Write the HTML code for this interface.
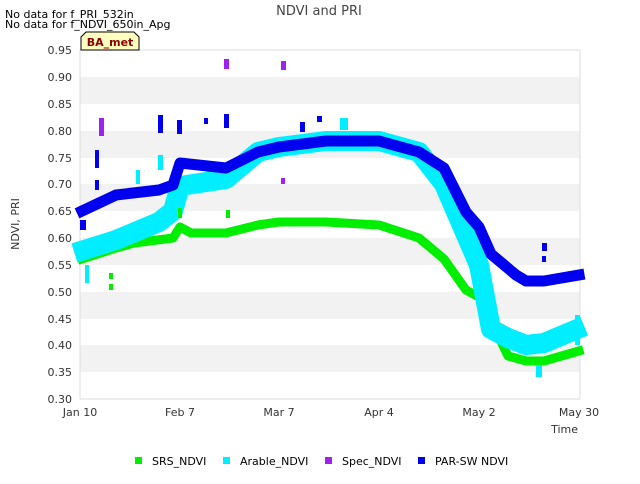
<!DOCTYPE html>
<html><head><style>
body{margin:0;width:640px;height:480px;background:#fff;font-family:"DejaVu Sans","Liberation Sans",sans-serif;overflow:hidden}
</style></head><body>
<svg width="640" height="480" xmlns="http://www.w3.org/2000/svg" font-family="DejaVu Sans, Liberation Sans, sans-serif">
<rect x="80" y="77" width="500" height="27" fill="#f2f2f2"/>
<rect x="80" y="131" width="500" height="27" fill="#f2f2f2"/>
<rect x="80" y="184" width="500" height="27" fill="#f2f2f2"/>
<rect x="80" y="238" width="500" height="27" fill="#f2f2f2"/>
<rect x="80" y="292" width="500" height="27" fill="#f2f2f2"/>
<rect x="80" y="345" width="500" height="27" fill="#f2f2f2"/>
<g stroke="#ddd" stroke-width="1">
<line x1="80" y1="50" x2="580" y2="50"/><line x1="80" y1="399" x2="580" y2="399"/>
<line x1="80" y1="50" x2="80" y2="399"/><line x1="580" y1="50" x2="580" y2="399"/>
</g>
<g stroke-linejoin="round" stroke-linecap="square" fill="none">
<polyline stroke="#00ee00" stroke-width="9" points="82,259 116,248 134,243 173,238 180,227 191,233 226,233 258,225 279,222 326,222 379,225 419,238 444,259 466,290 479,297 491,318 498,335 508,356 526,361 544,361 579,351"/>
<polyline stroke="#00eeff" stroke-width="20" points="84,250 116,240 159,222 173,211 180,186 226,179 258,152 279,147 326,141 379,141 419,152 444,184 466,235 479,265 491,329 508,338 526,345 544,343 575,330"/>
<polyline stroke="#0000ee" stroke-width="11" points="82,211 116,195 159,190 173,185 180,163 226,168 258,152 279,147 326,141 379,141 419,152 444,168 466,212 479,227 491,254 516,275 526,281 544,281 579,275"/>
</g>
<g fill="#00ee00">
<rect x="109" y="273" width="4" height="6"/><rect x="109" y="284" width="4" height="6"/><rect x="178" y="208" width="4" height="10"/><rect x="226" y="210" width="4" height="8"/>
</g>
<g fill="#00eeff">
<rect x="136" y="170" width="4" height="14"/><rect x="158" y="155" width="5" height="15"/><rect x="85" y="265" width="4" height="18"/><rect x="340" y="118" width="8" height="12"/><rect x="536" y="365" width="6" height="12"/><rect x="575" y="315" width="5" height="30"/>
</g>
<g fill="#a020f0">
<rect x="99" y="118" width="5" height="18"/><rect x="224" y="59" width="5" height="10"/><rect x="281" y="61" width="5" height="9"/><rect x="281" y="178" width="4" height="6"/>
</g>
<g fill="#0000ee">
<rect x="95" y="150" width="4" height="18"/><rect x="95" y="180" width="4" height="10"/><rect x="158" y="115" width="5" height="18"/><rect x="177" y="120" width="5" height="14"/><rect x="204" y="118" width="4" height="6"/><rect x="224" y="114" width="5" height="14"/><rect x="300" y="122" width="5" height="10"/><rect x="317" y="116" width="5" height="6"/><rect x="459" y="204" width="5" height="6"/><rect x="542" y="243" width="5" height="8"/><rect x="542" y="256" width="4" height="6"/><rect x="80" y="220" width="6" height="10"/>
</g>
<g font-size="11" fill="#333" text-anchor="end">
<text x="72" y="54">0.95</text><text x="72" y="81">0.90</text><text x="72" y="108">0.85</text><text x="72" y="135">0.80</text><text x="72" y="162">0.75</text><text x="72" y="188">0.70</text><text x="72" y="215">0.65</text><text x="72" y="242">0.60</text><text x="72" y="269">0.55</text><text x="72" y="296">0.50</text><text x="72" y="323">0.45</text><text x="72" y="349">0.40</text><text x="72" y="376">0.35</text><text x="72" y="403">0.30</text>
</g>
<g font-size="11" fill="#333" text-anchor="middle">
<text x="80" y="416">Jan 10</text><text x="180" y="416">Feb 7</text><text x="279" y="416">Mar 7</text><text x="379" y="416">Apr 4</text><text x="479" y="416">May 2</text><text x="579" y="416">May 30</text>
</g>
<text x="578" y="433" font-size="11" fill="#333" text-anchor="end">Time</text>
<text x="19" y="224" font-size="11" fill="#333" text-anchor="middle" transform="rotate(-90 19 224)">NDVI, PRI</text>
<text x="319" y="15" font-size="13" fill="#444" text-anchor="middle">NDVI and PRI</text>
<text x="5" y="18" font-size="11" fill="#000">No data for f_PRI_532in</text>
<text x="5" y="28" font-size="11" fill="#000">No data for f_NDVI_650in_Apg</text>
<path d="M81,50 L81,37 L86,32 L134,32 L139,37 L139,50 Z" fill="#ffffc0" stroke="#000" stroke-width="1"/>
<text x="110" y="46" font-size="11" font-weight="bold" fill="#8b0000" text-anchor="middle">BA_met</text>
<g font-size="11" fill="#000">
<rect x="135" y="457" width="7" height="7" fill="#00ee00"/><text x="152" y="465">SRS_NDVI</text>
<rect x="223" y="457" width="7" height="7" fill="#00eeff"/><text x="240" y="465">Arable_NDVI</text>
<rect x="325" y="457" width="7" height="7" fill="#a020f0"/><text x="342" y="465">Spec_NDVI</text>
<rect x="418" y="457" width="7" height="7" fill="#0000ee"/><text x="435" y="465">PAR-SW NDVI</text>
</g>
</svg>
</body></html>
